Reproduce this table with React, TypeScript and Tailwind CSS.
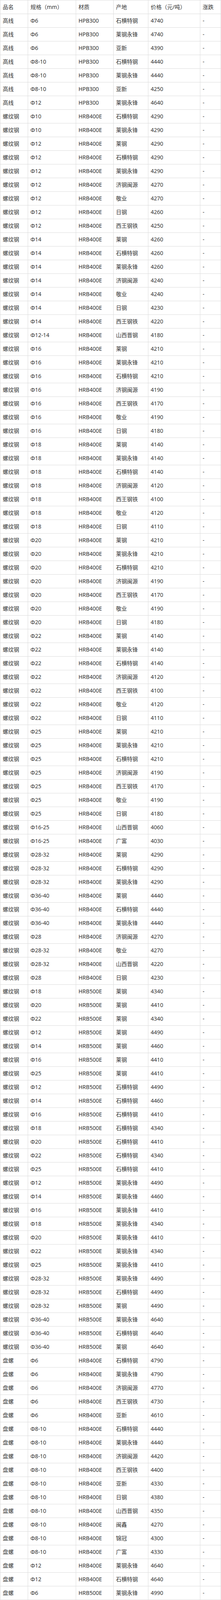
import React from "react";

const RAW = `高线|Φ6|HPB300|石横特钢|4740
高线|Φ6|HPB300|莱钢永锋|4740
高线|Φ6|HPB300|亚新|4390
高线|Φ8-10|HPB300|石横特钢|4440
高线|Φ8-10|HPB300|莱钢永锋|4440
高线|Φ8-10|HPB300|亚新|4250
高线|Φ12|HPB300|莱钢永锋|4640
螺纹钢|Φ10|HRB400E|石横特钢|4290
螺纹钢|Φ10|HRB400E|莱钢永锋|4290
螺纹钢|Φ12|HRB400E|莱钢|4290
螺纹钢|Φ12|HRB400E|石横特钢|4290
螺纹钢|Φ12|HRB400E|莱钢永锋|4290
螺纹钢|Φ12|HRB400E|济钢闽源|4270
螺纹钢|Φ12|HRB400E|敬业|4270
螺纹钢|Φ12|HRB400E|日钢|4260
螺纹钢|Φ12|HRB400E|西王钢铁|4250
螺纹钢|Φ14|HRB400E|莱钢|4260
螺纹钢|Φ14|HRB400E|石横特钢|4260
螺纹钢|Φ14|HRB400E|莱钢永锋|4260
螺纹钢|Φ14|HRB400E|济钢闽源|4240
螺纹钢|Φ14|HRB400E|敬业|4240
螺纹钢|Φ14|HRB400E|日钢|4230
螺纹钢|Φ14|HRB400E|西王钢铁|4220
螺纹钢|Φ12-14|HRB400E|山西晋钢|4180
螺纹钢|Φ16|HRB400E|莱钢|4210
螺纹钢|Φ16|HRB400E|莱钢永锋|4210
螺纹钢|Φ16|HRB400E|石横特钢|4210
螺纹钢|Φ16|HRB400E|济钢闽源|4190
螺纹钢|Φ16|HRB400E|西王钢铁|4170
螺纹钢|Φ16|HRB400E|敬业|4190
螺纹钢|Φ16|HRB400E|日钢|4180
螺纹钢|Φ18|HRB400E|莱钢|4140
螺纹钢|Φ18|HRB400E|莱钢永锋|4140
螺纹钢|Φ18|HRB400E|石横特钢|4140
螺纹钢|Φ18|HRB400E|济钢闽源|4120
螺纹钢|Φ18|HRB400E|西王钢铁|4100
螺纹钢|Φ18|HRB400E|敬业|4120
螺纹钢|Φ18|HRB400E|日钢|4110
螺纹钢|Φ20|HRB400E|莱钢|4210
螺纹钢|Φ20|HRB400E|莱钢永锋|4210
螺纹钢|Φ20|HRB400E|石横特钢|4210
螺纹钢|Φ20|HRB400E|济钢闽源|4190
螺纹钢|Φ20|HRB400E|西王钢铁|4170
螺纹钢|Φ20|HRB400E|敬业|4190
螺纹钢|Φ20|HRB400E|日钢|4180
螺纹钢|Φ22|HRB400E|莱钢|4140
螺纹钢|Φ22|HRB400E|莱钢永锋|4140
螺纹钢|Φ22|HRB400E|石横特钢|4140
螺纹钢|Φ22|HRB400E|济钢闽源|4120
螺纹钢|Φ22|HRB400E|西王钢铁|4100
螺纹钢|Φ22|HRB400E|敬业|4120
螺纹钢|Φ22|HRB400E|日钢|4110
螺纹钢|Φ25|HRB400E|莱钢|4210
螺纹钢|Φ25|HRB400E|莱钢永锋|4210
螺纹钢|Φ25|HRB400E|石横特钢|4210
螺纹钢|Φ25|HRB400E|济钢闽源|4190
螺纹钢|Φ25|HRB400E|西王钢铁|4170
螺纹钢|Φ25|HRB400E|敬业|4190
螺纹钢|Φ25|HRB400E|日钢|4180
螺纹钢|Φ16-25|HRB400E|山西晋钢|4060
螺纹钢|Φ16-25|HRB400E|广富|4030
螺纹钢|Φ28-32|HRB400E|莱钢|4290
螺纹钢|Φ28-32|HRB400E|石横特钢|4290
螺纹钢|Φ28-32|HRB400E|莱钢永锋|4290
螺纹钢|Φ36-40|HRB400E|莱钢|4440
螺纹钢|Φ36-40|HRB400E|石横特钢|4440
螺纹钢|Φ36-40|HRB400E|莱钢永锋|4440
螺纹钢|Φ28|HRB400E|济钢闽源|4270
螺纹钢|Φ28-32|HRB400E|敬业|4270
螺纹钢|Φ28-32|HRB400E|山西晋钢|4220
螺纹钢|Φ28|HRB400E|日钢|4230
螺纹钢|Φ18|HRB500E|莱钢|4340
螺纹钢|Φ20|HRB500E|莱钢|4410
螺纹钢|Φ22|HRB500E|莱钢|4340
螺纹钢|Φ12|HRB500E|莱钢|4490
螺纹钢|Φ14|HRB500E|莱钢|4460
螺纹钢|Φ16|HRB500E|莱钢|4410
螺纹钢|Φ25|HRB500E|莱钢|4410
螺纹钢|Φ12|HRB500E|石横特钢|4490
螺纹钢|Φ14|HRB500E|石横特钢|4460
螺纹钢|Φ16|HRB500E|石横特钢|4410
螺纹钢|Φ18|HRB500E|石横特钢|4340
螺纹钢|Φ20|HRB500E|石横特钢|4410
螺纹钢|Φ22|HRB500E|石横特钢|4340
螺纹钢|Φ25|HRB500E|石横特钢|4410
螺纹钢|Φ12|HRB500E|莱钢永锋|4490
螺纹钢|Φ14|HRB500E|莱钢永锋|4460
螺纹钢|Φ16|HRB500E|莱钢永锋|4410
螺纹钢|Φ18|HRB500E|莱钢永锋|4340
螺纹钢|Φ20|HRB500E|莱钢永锋|4410
螺纹钢|Φ22|HRB500E|莱钢永锋|4340
螺纹钢|Φ25|HRB500E|莱钢永锋|4410
螺纹钢|Φ28-32|HRB500E|莱钢永锋|4490
螺纹钢|Φ28-32|HRB500E|石横特钢|4490
螺纹钢|Φ28-32|HRB500E|莱钢|4490
螺纹钢|Φ36-40|HRB500E|莱钢永锋|4640
螺纹钢|Φ36-40|HRB500E|石横特钢|4640
螺纹钢|Φ36-40|HRB500E|莱钢|4640
盘螺|Φ6|HRB400E|石横特钢|4790
盘螺|Φ6|HRB400E|莱钢永锋|4790
盘螺|Φ6|HRB400E|济钢闽源|4770
盘螺|Φ6|HRB400E|西王钢铁|4730
盘螺|Φ6|HRB400E|亚新|4610
盘螺|Φ8-10|HRB400E|石横特钢|4440
盘螺|Φ8-10|HRB400E|莱钢永锋|4440
盘螺|Φ8-10|HRB400E|济钢闽源|4420
盘螺|Φ8-10|HRB400E|西王钢铁|4400
盘螺|Φ8-10|HRB400E|亚新|4330
盘螺|Φ8-10|HRB400E|日钢|4380
盘螺|Φ8-10|HRB400E|山西晋钢|4350
盘螺|Φ8-10|HRB400E|闽鑫|4270
盘螺|Φ8-10|HRB400E|锦冠|4300
盘螺|Φ8-10|HRB400E|广富|4330
盘螺|Φ12|HRB400E|莱钢永锋|4640
盘螺|Φ12|HRB400E|石横特钢|4640
盘螺|Φ6|HRB500E|莱钢永锋|4990
盘螺|Φ8-10|HRB500E|莱钢永锋|4640
盘螺|Φ12|HRB500E|莱钢永锋|4840`;

const HEADER = ["品名", "规格（mm）", "材质", "产地", "价格（元/吨）", "涨跌"];

const rows: string[][] = RAW.split("\n").map((l) => [...l.split("|"), "-"]);

function Row({ cells }: { cells: string[] }) {
  return (
    <div className="grid h-[35px] grid-cols-[71px_123px_96px_89px_133px_53px] border-b border-[#dcdcdc]">
      {cells.map((c, i) => (
        <div
          key={i}
          className="flex items-center overflow-hidden whitespace-nowrap border-r border-[#dcdcdc] pl-[6px]"
        >
          {c}
        </div>
      ))}
    </div>
  );
}

export default function App() {
  return (
    <div
      className="min-h-[4168px] w-[566px] bg-white text-[14px] leading-[20px] text-[#333333]"
      style={{ fontFamily: '"Noto Sans", "Noto Sans CJK SC", sans-serif' }}
    >
      <div className="w-[566px] border-l border-t border-[#dcdcdc]">
        <Row cells={HEADER} />
        {rows.map((r, i) => (
          <Row key={i} cells={r} />
        ))}
      </div>
    </div>
  );
}
